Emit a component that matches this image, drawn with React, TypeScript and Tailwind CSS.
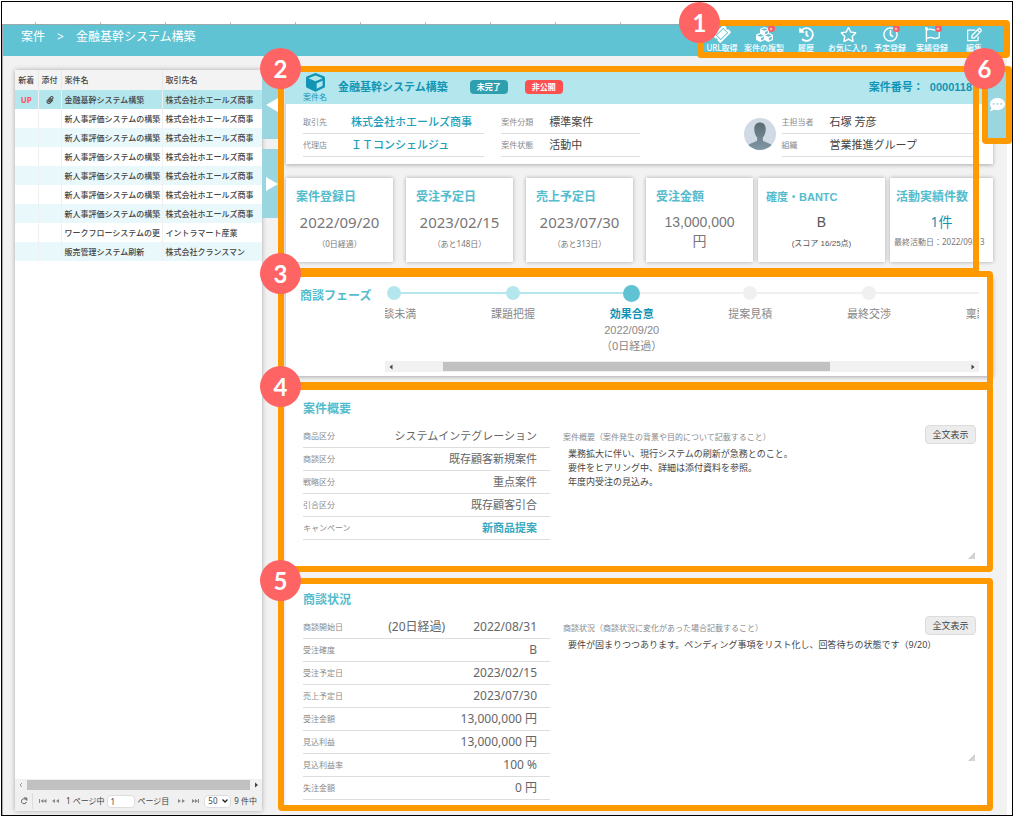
import type { ReactNode } from "react";
import {
  FaCommentDots,
  FaCube,
  FaCubes,
  FaHistory,
  FaPaperclip,
  FaRegClock,
  FaRegEdit,
  FaRegFlag,
  FaRegStar,
  FaTicketAlt,
} from "react-icons/fa";

const cases = [
  { name: "金融基幹システム構築", client: "株式会社ホエールズ商事", isNew: true },
  { name: "新人事評価システムの構築", client: "株式会社ホエールズ商事" },
  { name: "新人事評価システムの構築", client: "株式会社ホエールズ商事" },
  { name: "新人事評価システムの構築", client: "株式会社ホエールズ商事" },
  { name: "新人事評価システムの構築", client: "株式会社ホエールズ商事" },
  { name: "新人事評価システムの構築", client: "株式会社ホエールズ商事" },
  { name: "新人事評価システムの構築", client: "株式会社ホエールズ商事" },
  { name: "ワークフローシステムの更", client: "イントラマート産業" },
  { name: "販売管理システム刷新", client: "株式会社クランスマン" },
];

const tools = [
  { label: "URL取得", icon: <FaTicketAlt className="size-4 -rotate-45" /> },
  { label: "案件の複製", icon: <FaCubes className="size-[17px]" />, plus: true },
  { label: "履歴", icon: <FaHistory className="size-[15px]" /> },
  { label: "お気に入り", icon: <FaRegStar className="size-[17px]" /> },
  { label: "予定登録", icon: <FaRegClock className="size-[15px]" />, plus: true },
  { label: "実績登録", icon: <FaRegFlag className="size-[15px]" />, plus: true },
  { label: "編集", icon: <FaRegEdit className="size-[15px]" /> },
];

const phases = [
  { name: "商談未満", state: "done" },
  { name: "課題把握", state: "done" },
  { name: "効果合意", state: "current", date: "2022/09/20", note: "（0日経過）" },
  { name: "提案見積", state: "todo" },
  { name: "最終交渉", state: "todo" },
  { name: "稟議申請", state: "todo" },
];

const outline = [
  { label: "商品区分", value: "システムインテグレーション" },
  { label: "商談区分", value: "既存顧客新規案件" },
  { label: "戦略区分", value: "重点案件" },
  { label: "引合区分", value: "既存顧客引合" },
  { label: "キャンペーン", value: "新商品提案", link: true },
];

const situation = [
  { label: "商談開始日", value: "2022/08/31", extra: "(20日経過)" },
  { label: "受注確度", value: "B" },
  { label: "受注予定日", value: "2023/02/15" },
  { label: "売上予定日", value: "2023/07/30" },
  { label: "受注金額", value: "13,000,000 円" },
  { label: "見込利益", value: "13,000,000 円" },
  { label: "見込利益率", value: "100 %" },
  { label: "失注金額", value: "0 円" },
];

/* Numbered callout: an orange outline with a round marker on its corner. */
function Callout({ n, className }: { n: number; className: string }) {
  return (
    <div className={`pointer-events-none absolute rounded-sm border-[6px] border-[#ff9900] ${className}`}>
      <span className="absolute -left-6 -top-6 z-20 flex size-[41px] items-center justify-center rounded-full bg-[#ff6464] font-['Lato',sans-serif] text-2xl font-bold text-white">
        {n}
      </span>
    </div>
  );
}

type FieldData = { label: string; value: string; link?: boolean; extra?: string };

function HeadField({ label, value, link }: FieldData) {
  return (
    <div className="flex h-[23px] items-center border-b border-[#ddd]">
      <dt className="w-12 shrink-0 text-[8px] text-[#8a8a8a]">{label}</dt>
      <dd className="whitespace-nowrap text-[11px] text-[#444]">
        {link ? <a href="#" className="font-medium text-[#22a0ba]">{value}</a> : value}
      </dd>
    </div>
  );
}

function DetailList({ items, className }: { items: FieldData[]; className: string }) {
  return (
    <dl className={`w-[247px] shrink-0 ${className}`}>
      {items.map((f) => (
        <div key={f.label} className="flex h-[23px] items-center justify-between border-b border-[#ddd] pr-[13px]">
          <dt className="text-[8px] text-[#8a8a8a]">{f.label}</dt>
          <dd className="flex gap-7 whitespace-nowrap text-[#666]">
            {f.extra && <span>{f.extra}</span>}
            {f.link ? <a href="#" className="font-bold text-[#3ba9c0]">{f.value}</a> : <span>{f.value}</span>}
          </dd>
        </div>
      ))}
    </dl>
  );
}

function Memo({ id, label, text, height }: { id: string; label: string; text: string; height: string }) {
  return (
    <div className="ml-[13px] flex-1">
      <div className="flex h-[21px] items-start justify-between">
        <label htmlFor={id} className="text-[8px] leading-[23px] text-[#8a8a8a]">{label}</label>
        <button type="button" className="h-[19px] w-[51px] rounded-sm border border-[#dcdcdc] bg-[#ececec] text-[9px] leading-none text-[#444]">
          全文表示
        </button>
      </div>
      <div className="relative flex">
        <textarea
          id={id}
          defaultValue={text}
          className={`w-full resize-none bg-transparent px-[5px] py-px text-[9px] leading-[14px] text-[#444] outline-none ${height}`}
        />
        <svg viewBox="0 0 8 8" className="absolute bottom-0 right-px size-[7px]" aria-hidden="true">
          <path d="M8 0V8H0Z" fill="#ccc" />
          <path d="M3.5 8L8 3.5M6 8L8 6" stroke="#eee" strokeWidth="0.7" />
        </svg>
      </div>
    </div>
  );
}

function Kpi({ title, children, className = "" }: { title: string; children: ReactNode; className?: string }) {
  return (
    <section className={`h-21 min-w-0 bg-white pt-2.5 shadow-[0_0_4px_rgba(0,0,0,0.3)] ${className}`}>
      <h3 className="whitespace-nowrap font-bold leading-[18px] text-[#55bccd]">{title}</h3>
      {children}
    </section>
  );
}

function DateKpi({ title, date, note }: { title: string; date: string; note: string }) {
  return (
    <Kpi title={title} className="pl-2.5 text-[12px]">
      <p className="-ml-2.5 mt-1.5 text-center text-[15px] leading-5 text-[#777]">{date}</p>
      <p className="-ml-2.5 mt-1.5 text-center text-[8px] leading-3 text-[#777]">{note}</p>
    </Kpi>
  );
}

function Toolbar() {
  return (
    <nav className="relative mr-3 flex">
      {tools.map((t) => (
        <button key={t.label} type="button" className="flex w-[42px] flex-col items-center text-white">
          <span className="relative flex h-[18px] items-center">
            {t.icon}
            {t.plus && (
              <span className="absolute -right-0.5 top-0 flex size-[7px] items-center justify-center rounded-full bg-[#ff5a5f]">
                <svg viewBox="0 0 6 6" className="size-1" aria-hidden="true">
                  <path d="M3 1V5M1 3H5" stroke="white" strokeWidth="1" />
                </svg>
              </span>
            )}
          </span>
          <span className="whitespace-nowrap text-[8px] font-medium leading-2.5">{t.label}</span>
        </button>
      ))}
      <Callout n={1} className="-bottom-[5px] -left-1 -right-[15px] -top-[5px]" />
    </nav>
  );
}

function CaseList() {
  return (
    <aside className="flex w-[247px] shrink-0 flex-col bg-white shadow-[0_0_5px_rgba(0,0,0,0.3)]">
      <table className="w-full table-fixed text-left text-[8px] leading-3 text-[#444]">
        <colgroup>
          <col className="w-[23px]" />
          <col className="w-[23px]" />
          <col className="w-[101px]" />
          <col />
        </colgroup>
        <thead>
          <tr className="h-5 bg-[#f3f3f3]">
            <th className="border-r border-[#e8e8e8] text-center font-medium">新着</th>
            <th className="border-r border-[#e8e8e8] text-center font-medium">添付</th>
            <th className="border-r border-[#e8e8e8] pl-[3px] font-medium">案件名</th>
            <th className="pl-[3px] font-medium">取引先名</th>
          </tr>
        </thead>
        <tbody>
          {cases.map((c, i) => (
            <tr key={i} className={`h-[19px] ${c.isNew ? "bg-[#b4e6ed]" : i % 2 === 0 ? "bg-[#e9f8fb]" : "bg-white"}`}>
              <td className="border-r border-[#f0f0f0] text-center font-bold text-[#f55]">{c.isNew ? "UP" : ""}</td>
              <td className="border-r border-[#f0f0f0]">{c.isNew && <FaPaperclip className="mx-auto size-2" />}</td>
              <td className="whitespace-nowrap border-r border-[#f0f0f0] pl-[3px] font-medium">{c.name}</td>
              <td className="whitespace-nowrap pl-[3px] font-medium">{c.client}</td>
            </tr>
          ))}
        </tbody>
      </table>
      <div className="mt-auto flex h-3 items-center gap-1 bg-[#f1f1f1] px-1">
        <svg viewBox="0 0 4 6" className="h-1.5 w-1" aria-hidden="true"><path d="M3 1L1 3L3 5" fill="none" stroke="#999" /></svg>
        <div className="h-2.5 flex-1 bg-[#c1c1c1]" />
        <svg viewBox="0 0 4 6" className="h-1.5 w-1" aria-hidden="true"><path d="M1 0.5L4 3L1 5.5Z" fill="#444" /></svg>
      </div>
      <div className="flex h-5 items-center bg-[#f0f0f0] text-[8px] text-[#444]">
        <button type="button" aria-label="再読込" className="flex h-4 w-[18px] items-center justify-center border-r border-[#ddd]">
          <svg viewBox="0 0 8 8" className="size-2" aria-hidden="true">
            <path d="M6.3 3.2A2.5 2.5 0 1 0 6.4 5M4 1H6.8V3.6" fill="none" stroke="#555" />
          </svg>
        </button>
        <button type="button" aria-label="最初のページ" className="ml-[5px] w-[9px]">
          <svg viewBox="0 0 9 6" className="h-1.5 w-[9px]" aria-hidden="true"><path d="M1 1H2V5H1ZM5.5 1V5L2.5 3ZM8.5 1V5L5.5 3Z" fill="#888" /></svg>
        </button>
        <button type="button" aria-label="前のページ" className="ml-1 w-[9px]">
          <svg viewBox="0 0 9 6" className="h-1.5 w-[9px]" aria-hidden="true"><path d="M4 1V5L1 3ZM8 1V5L5 3Z" fill="#888" /></svg>
        </button>
        <label htmlFor="page" className="ml-1.5 whitespace-nowrap">1 ページ中</label>
        <input id="page" defaultValue="1" className="ml-0.5 h-[13px] w-7 rounded-sm border border-[#ddd] bg-white px-[3px] text-[8px]" />
        <span className="ml-[3px] whitespace-nowrap">ページ目</span>
        <button type="button" aria-label="次のページ" className="ml-2 w-[9px]">
          <svg viewBox="0 0 9 6" className="h-1.5 w-[9px]" aria-hidden="true"><path d="M1 1V5L4 3ZM5 1V5L8 3Z" fill="#888" /></svg>
        </button>
        <button type="button" aria-label="最後のページ" className="ml-[5px] w-[9px]">
          <svg viewBox="0 0 9 6" className="h-1.5 w-[9px]" aria-hidden="true"><path d="M1 1V5L4 3ZM4 1V5L7 3ZM7 1H8V5H7Z" fill="#888" /></svg>
        </button>
        <div className="relative ml-1 flex items-center">
          <select aria-label="表示件数" defaultValue="50" className="h-[13px] w-[27px] appearance-none rounded-sm border border-[#ddd] bg-white pl-[3px] text-[8px] leading-none">
            <option>50</option>
          </select>
          <svg viewBox="0 0 6 4" className="pointer-events-none absolute right-[3px] h-1 w-1.5" aria-hidden="true"><path d="M0.5 0.5L3 3L5.5 0.5" fill="none" stroke="#222" strokeWidth="1.3" /></svg>
        </div>
        <span className="ml-[3px] whitespace-nowrap">9 件中</span>
      </div>
    </aside>
  );
}

function PhaseCard() {
  return (
    <section className="relative mt-[15px] flex h-[99px] bg-white pl-3.5 pr-3.5 shadow-[0_1px_4px_rgba(0,0,0,0.3)]">
      <h3 className="mt-2.5 w-[85px] shrink-0 whitespace-nowrap text-[12px] font-bold leading-[18px] text-[#55bccd]">商談フェーズ</h3>
      <div className="flex min-w-0 flex-1 flex-col">
        <div className="overflow-hidden">
          <ol className="-ml-[50px] -mr-[50px] flex h-[84px]">
            {phases.map((p, i) => (
              <li key={p.name} className="relative flex w-[17.1%] shrink-0 flex-col items-center pt-[7px] text-[11px] leading-4 text-[#888]">
                {i < phases.length - 1 && (
                  <span className={`absolute left-1/2 top-[15px] h-0.5 w-full ${i < 2 ? "bg-[#b4e6ed]" : "bg-[#f0f0f0]"}`} />
                )}
                <span className="relative flex h-[18px] items-center">
                  <span
                    className={`rounded-full ${
                      p.state === "current" ? "size-[17px] bg-[#60c3d4]" : p.state === "done" ? "size-3.5 bg-[#b4e6ed]" : "size-3.5 bg-[#f0f0f0]"
                    }`}
                  />
                </span>
                <span className={`mt-1 ${p.state === "current" ? "font-bold text-[#0f93b3]" : ""}`}>{p.name}</span>
                {p.date && <span className="font-['Liberation_Sans',sans-serif]">{p.date}</span>}
                {p.note && <span>{p.note}</span>}
              </li>
            ))}
          </ol>
        </div>
        <div className="flex h-[11px] items-center bg-[#f1f1f1] px-1">
          <svg viewBox="0 0 4 6" className="h-1.5 w-1" aria-hidden="true"><path d="M3.5 0.5L0.5 3L3.5 5.5Z" fill="#444" /></svg>
          <div className="mx-1 flex flex-1"><div className="ml-[8%] h-[9px] w-[68%] bg-[#c1c1c1]" /></div>
          <svg viewBox="0 0 4 6" className="h-1.5 w-1" aria-hidden="true"><path d="M0.5 0.5L3.5 3L0.5 5.5Z" fill="#444" /></svg>
        </div>
      </div>
      <Callout n={3} className="-bottom-3 -left-2 right-0 -top-1.5" />
    </section>
  );
}

export default function App() {
  return (
    <div className="bg-white pl-px pt-px font-['Noto_Sans','Noto_Sans_CJK_JP',sans-serif]" lang="ja">
      <div className="border border-black">
        <div className="flex h-[22px] items-end overflow-hidden pl-[33px]">
          {Array.from({ length: 15 }, (_, i) => (
            <span key={i} className="h-0.5 w-[65px] shrink-0 border-l border-[#bbb]" />
          ))}
        </div>

        <div className="mr-[5px] border-l border-[#aaa] bg-[#f2f2f2]">
          <header className="flex h-8 items-start justify-between border-t border-[#9aa] bg-[#60c3d4] pl-[18px]">
            <h1 className="flex gap-3 whitespace-nowrap text-[12px] leading-6 text-white">
              <span>案件</span>
              <span>&gt;</span>
              <span>金融基幹システム構築</span>
            </h1>
            <Toolbar />
          </header>

          <div className="relative flex pb-2 pl-3 pr-3.5 pt-3.5">
            <div className="-mb-1 flex">
              <CaseList />
            </div>

            <div className="flex w-4 shrink-0 flex-col gap-2.5">
              <button type="button" aria-label="一覧を閉じる" className="flex h-[69px] items-center justify-end bg-[#9ad6df]">
                <svg viewBox="0 0 12 14" className="h-3.5 w-3" aria-hidden="true"><path d="M12 0V14L0 7Z" fill="white" /></svg>
              </button>
              <button type="button" aria-label="一覧を開く" className="flex h-[69px] items-center justify-end bg-[#9ad6df]">
                <svg viewBox="0 0 12 14" className="h-3.5 w-3" aria-hidden="true"><path d="M0 0V14L12 7Z" fill="white" /></svg>
              </button>
            </div>

            <main className="ml-2 min-w-0 flex-1">
              <div className="relative">
                <section className="bg-white shadow-[0_1px_4px_rgba(0,0,0,0.3)]">
                  <div className="flex h-[34px] items-center bg-[#b4e6ed] pl-[17px] pr-[21px] text-[#1295b5]">
                    <div className="flex w-6 flex-col items-center">
                      <FaCube className="size-[19px]" />
                      <span className="whitespace-nowrap text-[8px] leading-2.5">案件名</span>
                    </div>
                    <h2 className="ml-[11px] whitespace-nowrap text-[11px] font-bold">金融基幹システム構築</h2>
                    <span className="ml-[22px] h-3.5 w-[38px] rounded-sm bg-[#2f9fb0] text-center text-[8px] font-bold leading-3.5 text-white">未完了</span>
                    <span className="ml-[17px] h-3.5 w-[38px] rounded-sm bg-[#ff5050] text-center text-[8px] font-bold leading-3.5 text-white">非公開</span>
                    <p className="ml-auto flex gap-1.5 whitespace-nowrap text-[11px] font-bold">
                      <span>案件番号：</span>
                      <span className="font-['Liberation_Sans',sans-serif]">0000118</span>
                    </p>
                  </div>
                  <div className="flex items-center pb-[7px] pl-[17px] pr-4 pt-[7px]">
                    <dl className="flex-[181]">
                      <HeadField label="取引先" value="株式会社ホエールズ商事" link />
                      <HeadField label="代理店" value="ＩＴコンシェルジュ" link />
                    </dl>
                    <dl className="ml-[17px] flex-[138]">
                      <HeadField label="案件分類" value="標準案件" />
                      <HeadField label="案件状態" value="活動中" />
                    </dl>
                    <div className="ml-[104px] flex flex-[233] items-center gap-1.5">
                      <svg viewBox="0 0 32 32" className="size-8 shrink-0" role="img" aria-label="石塚 芳彦">
                        <defs>
                          <clipPath id="avatar"><circle cx="16" cy="16" r="16" /></clipPath>
                          <linearGradient id="skin" x1="0" y1="0" x2="0" y2="1">
                            <stop offset="0" stopColor="#5b6b74" />
                            <stop offset="1" stopColor="#7f97a4" />
                          </linearGradient>
                        </defs>
                        <g clipPath="url(#avatar)">
                          <rect width="32" height="32" fill="#cfdae5" />
                          <path d="M16 4.5C12 4.5 10 7.5 10.3 11.5C10.4 15.5 11.8 18 13.2 19.5V22.5C11 24.5 5.500 25 3 28.5V32H29V28.5C26.5 25 21 24.5 18.8 22.5V19.5C20.2 18 21.6 15.5 21.7 11.5C22 7.5 20 4.5 16 4.5Z" fill="url(#skin)" />
                        </g>
                      </svg>
                      <dl className="flex-1">
                        <HeadField label="主担当者" value="石塚 芳彦" />
                        <HeadField label="組織" value="営業推進グループ" />
                      </dl>
                    </div>
                  </div>
                </section>

                <div className="mt-3.5 grid grid-cols-[467fr_127fr_103fr] gap-[5px]">
                  <div className="grid grid-cols-4 gap-[13px]">
                    <DateKpi title="案件登録日" date="2022/09/20" note="（0日経過）" />
                    <DateKpi title="受注予定日" date="2023/02/15" note="（あと148日）" />
                    <DateKpi title="売上予定日" date="2023/07/30" note="（あと313日）" />
                    <Kpi title="受注金額" className="pl-2.5 text-[12px]">
                      <p className="-ml-2.5 mt-[7px] text-center font-['Liberation_Sans','Noto_Sans_CJK_JP',sans-serif] text-[14px] leading-[19px] text-[#777]">
                        13,000,000
                        <br />円
                      </p>
                    </Kpi>
                  </div>
                  <Kpi title="確度・BANTC" className="pl-2 font-['Liberation_Sans','Noto_Sans_CJK_JP',sans-serif] text-[11px]">
                    <p className="-ml-2 mt-1.5 text-center text-[14px] leading-5 text-[#555]">B</p>
                    <p className="-ml-2 mt-1.5 text-center text-[8px] leading-3 text-[#555]">(スコア 16/25点)</p>
                  </Kpi>
                  <Kpi title="活動実績件数" className="pl-1.5 text-[12px]">
                    <p className="mt-1.5 pr-1.5 text-center text-[14px] leading-5"><a href="#" className="text-[#1295b5]">1件</a></p>
                    <p className="-ml-0.5 mt-1 whitespace-nowrap text-[8px] leading-3 text-[#777]">最終活動日：2022/09/13</p>
                  </Kpi>
                </div>
                <Callout n={2} className="-bottom-3 -left-2 -top-1 right-3.5" />
              </div>

              <PhaseCard />

              <section className="relative mt-[11px] bg-white px-[17px] pb-2.5 pt-[13px]">
                <h3 className="text-[12px] font-bold leading-[18px] text-[#55bccd]">案件概要</h3>
                <div className="mt-[7px] flex">
                  <DetailList items={outline} className="text-[11px]" />
                  <Memo
                    id="outline-memo"
                    label="案件概要（案件発生の背景や目的について記載すること）"
                    text={"業務拡大に伴い、現行システムの刷新が急務とのこと。\n要件をヒアリング中、詳細は添付資料を参照。\n年度内受注の見込み。"}
                    height="h-[113px]"
                  />
                </div>
                <Callout n={4} className="-bottom-[3px] -left-2 right-0 -top-[3px]" />
              </section>

              <section className="relative mt-3 bg-white px-[17px] pb-[7px] pt-2.5">
                <h3 className="text-[12px] font-bold leading-[18px] text-[#55bccd]">商談状況</h3>
                <div className="mt-[7px] flex">
                  <DetailList items={situation} className="text-[12px]" />
                  <Memo
                    id="situation-memo"
                    label="商談状況（商談状況に変化があった場合記載すること）"
                    text="要件が固まりつつあります。ペンディング事項をリスト化し、回答待ちの状態です（9/20）"
                    height="h-[124px]"
                  />
                </div>
                <Callout n={5} className="-bottom-1 -left-2 right-0 -top-[3px]" />
              </section>
            </main>

            <div className="absolute -right-[5px] top-2.5 h-[78px] w-[30px] pl-1.5 pr-1.5 pt-1">
              <button type="button" aria-label="コメント" className="flex h-[69px] w-full items-center justify-center bg-[#9ad6df] text-white">
                <FaCommentDots className="size-[15px]" />
              </button>
              <Callout n={6} className="inset-0" />
            </div>
          </div>
        </div>
      </div>
    </div>
  );
}
